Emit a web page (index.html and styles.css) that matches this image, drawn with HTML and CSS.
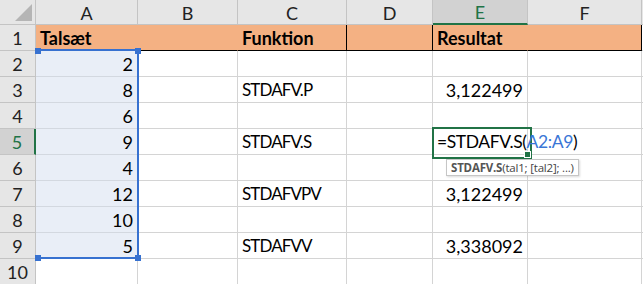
FILE: index.html
```html
<!DOCTYPE html>
<html lang="da">
  <head>
    <meta charset="UTF-8" />
    <title>STDAFV</title>
    <link rel="stylesheet" href="styles.css">
  </head>
  <body>
    <div class="sheet">
      <!-- column headers -->
      <div class="corner"><div class="corner-tri"></div></div>
      <div class="colhead">A</div>
      <div class="colhead">B</div>
      <div class="colhead">C</div>
      <div class="colhead">D</div>
      <div class="colhead active-col">E</div>
      <div class="colhead">F</div>
      <div class="colhead"></div>

      <!-- row 1 -->
      <div class="rowhead">1</div>
      <div class="cell title">Talsæt</div>
      <div class="cell title"></div>
      <div class="cell title edge">Funktion</div>
      <div class="cell title edge"></div>
      <div class="cell title">Resultat</div>
      <div class="cell title edge"></div>
      <div class="cell"></div>

      <!-- row 2 -->
      <div class="rowhead">2</div>
      <div class="cell num picked">2</div>
      <div class="cell"></div>
      <div class="cell"></div>
      <div class="cell"></div>
      <div class="cell"></div>
      <div class="cell"></div>
      <div class="cell"></div>

      <!-- row 3 -->
      <div class="rowhead">3</div>
      <div class="cell num picked">8</div>
      <div class="cell"></div>
      <div class="cell fn">STDAFV.P</div>
      <div class="cell"></div>
      <div class="cell num">3,122499</div>
      <div class="cell"></div>
      <div class="cell"></div>

      <!-- row 4 -->
      <div class="rowhead">4</div>
      <div class="cell num picked">6</div>
      <div class="cell"></div>
      <div class="cell"></div>
      <div class="cell"></div>
      <div class="cell"></div>
      <div class="cell"></div>
      <div class="cell"></div>

      <!-- row 5 -->
      <div class="rowhead active-row">5</div>
      <div class="cell num picked">9</div>
      <div class="cell"></div>
      <div class="cell fn">STDAFV.S</div>
      <div class="cell"></div>
      <div class="cell editing">
        <span class="formula">=STDAFV.S(<span class="ref">A2:A9</span>)</span>
        <div class="fill-handle"></div>
        <div class="tip"><b>STDAFV.S</b>(tal1; [tal2]; ...)</div>
      </div>
      <div class="cell"></div>
      <div class="cell"></div>

      <!-- row 6 -->
      <div class="rowhead">6</div>
      <div class="cell num picked">4</div>
      <div class="cell"></div>
      <div class="cell"></div>
      <div class="cell"></div>
      <div class="cell"></div>
      <div class="cell"></div>
      <div class="cell"></div>

      <!-- row 7 -->
      <div class="rowhead">7</div>
      <div class="cell num picked">12</div>
      <div class="cell"></div>
      <div class="cell fn">STDAFVPV</div>
      <div class="cell"></div>
      <div class="cell num">3,122499</div>
      <div class="cell"></div>
      <div class="cell"></div>

      <!-- row 8 -->
      <div class="rowhead">8</div>
      <div class="cell num picked">10</div>
      <div class="cell"></div>
      <div class="cell"></div>
      <div class="cell"></div>
      <div class="cell"></div>
      <div class="cell"></div>
      <div class="cell"></div>

      <!-- row 9 -->
      <div class="rowhead">9</div>
      <div class="cell num picked">5</div>
      <div class="cell"></div>
      <div class="cell fn">STDAFVV</div>
      <div class="cell"></div>
      <div class="cell num">3,338092</div>
      <div class="cell"></div>
      <div class="cell"></div>

      <!-- row 10 -->
      <div class="rowhead">10</div>
      <div class="cell"></div>
      <div class="cell"></div>
      <div class="cell"></div>
      <div class="cell"></div>
      <div class="cell"></div>
      <div class="cell"></div>
      <div class="cell"></div>

      <!-- range A2:A9 referenced by the formula -->
      <div class="range">
        <span class="handle tl"></span>
        <span class="handle tr"></span>
        <span class="handle bl"></span>
        <span class="handle br"></span>
      </div>
    </div>
  </body>
</html>
```

FILE: styles.css
```css
* {
  box-sizing: border-box;
}

body {
  margin: 0;
  background: #fff;
  overflow: hidden;
  font-family: Lato, "Open Sans", sans-serif;
  font-size: 18px;
  color: #000;
}

.sheet {
  position: relative;
  display: grid;
  grid-template-columns: 36px 102px 100px 109px 86px 95px 114px 1fr;
  grid-template-rows: 25px repeat(10, 26px);
  width: 643px;
  height: 284px;
}

.corner,
.colhead,
.rowhead {
  background: #e6e6e6;
  border-right: 1px solid #c4c4c4;
  border-bottom: 1px solid #c4c4c4;
  color: #222;
  display: flex;
  align-items: center;
  justify-content: center;
}

.corner {
  position: relative;
}

.corner-tri {
  position: absolute;
  right: 3px;
  bottom: 3px;
  width: 0;
  height: 0;
  border-left: 17px solid transparent;
  border-bottom: 17px solid #b5b5b5;
}

.colhead {
  padding-top: 1px;
}

.active-col {
  background: #d2d2d2;
  color: #217346;
  border-bottom: 2px solid #217346;
}

.active-row {
  background: #d2d2d2;
  color: #217346;
  border-right: 2px solid #217346;
}

.cell {
  position: relative;
  border-right: 1px solid #d4d4d4;
  border-bottom: 1px solid #d4d4d4;
  padding: 0 4px;
  display: flex;
  align-items: center;
  white-space: nowrap;
}

.num {
  justify-content: flex-end;
}

/* function names in column C are set a little tighter */
.fn {
  font-size: 17px;
  letter-spacing: -0.9px;
}

.picked {
  background: #e9eef7;
  border-right-color: #e9eef7;
  border-bottom-color: #d3d8e0;
}

.title {
  background: #f4b183;
  font-weight: bold;
  border-right-color: #f4b183;
  border-bottom: 1px solid #000;
}

.title.edge {
  border-right-color: #000;
}

/* active cell E5 with the formula being typed */
.editing {
  overflow: visible;
  z-index: 2;
}

.editing::before {
  content: "";
  position: absolute;
  left: -1px;
  top: -2px;
  width: 96px;
  height: 28px;
  border: 2px solid #217346;
}

.formula {
  position: relative;
  font-size: 17.5px;
  letter-spacing: -0.4px;
}

.ref {
  color: #3a76d6;
}

.fill-handle {
  position: absolute;
  right: -4px;
  bottom: -4px;
  width: 7px;
  height: 7px;
  background: #217346;
  border: 1px solid #fff;
}

.tip {
  position: absolute;
  left: 13px;
  top: 30px;
  padding: 0 4px;
  height: 17px;
  line-height: 15px;
  background: #fff;
  border: 1px solid #c6c6c6;
  box-shadow: 1px 1px 2px rgba(0, 0, 0, 0.15);
  font-family: "Open Sans", sans-serif;
  font-size: 11.5px;
  letter-spacing: -0.2px;
  color: #444;
}

.tip b {
  color: #555;
}

.range {
  position: absolute;
  left: 35px;
  top: 49px;
  width: 104px;
  height: 210px;
  border: 2px solid #3771d0;
  border-left-color: transparent;
  z-index: 3;
  pointer-events: none;
}

.handle {
  position: absolute;
  width: 6px;
  height: 6px;
  background: #3771d0;
}

.handle.tl { left: -2px; top: -3px; }
.handle.tr { right: -4px; top: -3px; }
.handle.bl { left: -2px; bottom: -4px; }
.handle.br { right: -4px; bottom: -4px; }
```
